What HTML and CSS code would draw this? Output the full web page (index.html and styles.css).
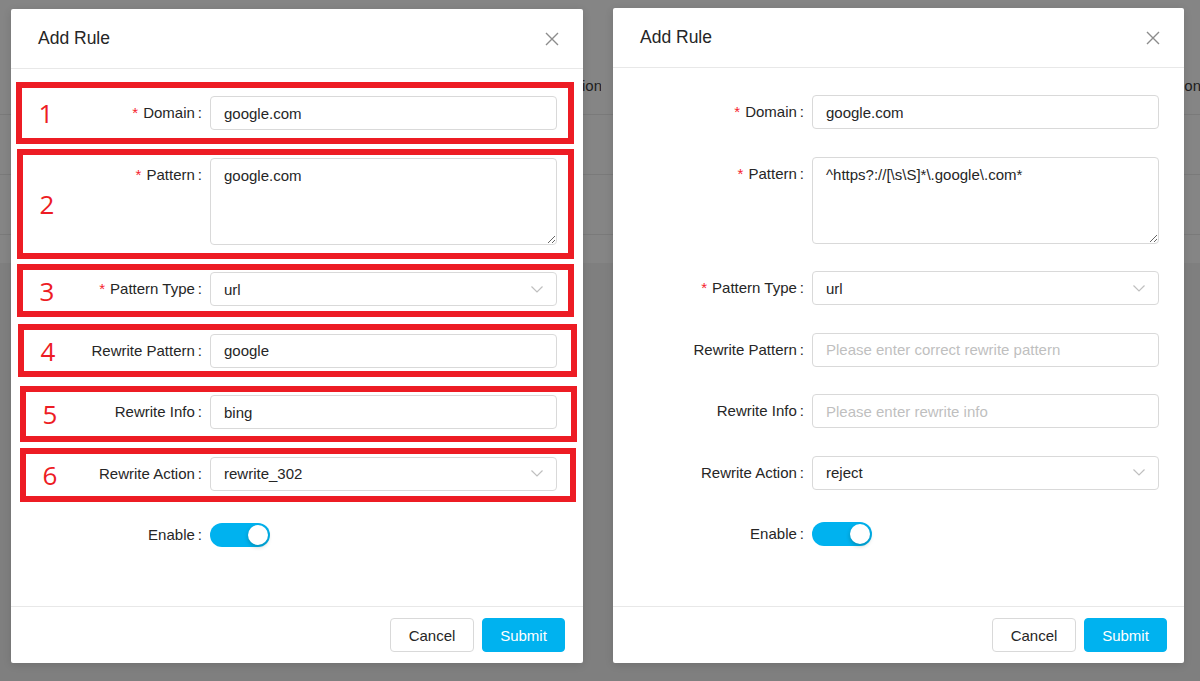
FILE: index.html
```html
<!DOCTYPE html>
<html lang="en">
<head>
<meta charset="utf-8">
<title>Add Rule</title>
<link rel="stylesheet" href="styles.css">
</head>
<body>
<div class="screen">
  <section class="half half-left">
    <div class="bg-page">
      <div class="bg-top"></div>
      <div class="bg-table">
        <div class="bg-row bg-head"><span class="bg-cell">Action</span></div>
        <div class="bg-row"></div>
        <div class="bg-row"></div>
        <div class="bg-row bg-short"></div>
      </div>
    </div>
    <div class="modal modal-left">
      <header class="modal-header">
        <h2 class="modal-title">Add Rule</h2>
        <span class="modal-close"><svg viewBox="0 0 14 14" width="14" height="14"><path d="M1 1 L13 13 M13 1 L1 13" stroke="#8c8c8c" stroke-width="1.4" fill="none"/></svg></span>
      </header>
      <div class="modal-body">
        <div class="form-item">
          <label class="form-label req">Domain</label>
          <div class="form-control"><input class="input" type="text" value="google.com"></div>
        </div>
        <div class="form-item">
          <label class="form-label req">Pattern</label>
          <div class="form-control"><textarea class="textarea">google.com</textarea></div>
        </div>
        <div class="form-item">
          <label class="form-label req">Pattern Type</label>
          <div class="form-control"><div class="select"><span>url</span><svg class="chev" viewBox="0 0 12 7" width="12" height="7"><path d="M0.5 0.5 L6 6 L11.5 0.5" stroke="#bfbfbf" stroke-width="1.2" fill="none"/></svg></div></div>
        </div>
        <div class="form-item">
          <label class="form-label">Rewrite Pattern</label>
          <div class="form-control"><input class="input" type="text" value="google"></div>
        </div>
        <div class="form-item">
          <label class="form-label">Rewrite Info</label>
          <div class="form-control"><input class="input" type="text" value="bing"></div>
        </div>
        <div class="form-item">
          <label class="form-label">Rewrite Action</label>
          <div class="form-control"><div class="select"><span>rewrite_302</span><svg class="chev" viewBox="0 0 12 7" width="12" height="7"><path d="M0.5 0.5 L6 6 L11.5 0.5" stroke="#bfbfbf" stroke-width="1.2" fill="none"/></svg></div></div>
        </div>
        <div class="form-item">
          <label class="form-label">Enable</label>
          <div class="form-control"><span class="switch"><span class="knob"></span></span></div>
        </div>
      </div>
      <footer class="modal-footer">
        <button class="btn">Cancel</button>
        <button class="btn btn-primary">Submit</button>
      </footer>
      <div class="mark mark-1"><span class="mark-num">1</span></div>
      <div class="mark mark-2"><span class="mark-num">2</span></div>
      <div class="mark mark-3"><span class="mark-num">3</span></div>
      <div class="mark mark-4"><span class="mark-num">4</span></div>
      <div class="mark mark-5"><span class="mark-num">5</span></div>
      <div class="mark mark-6"><span class="mark-num">6</span></div>
    </div>
  </section>

  <section class="half half-right">
    <div class="bg-page">
      <div class="bg-top"></div>
      <div class="bg-table">
        <div class="bg-row bg-head"><span class="bg-cell">Action</span></div>
        <div class="bg-row"></div>
        <div class="bg-row"></div>
        <div class="bg-row bg-short"></div>
      </div>
    </div>
    <div class="modal modal-right">
      <header class="modal-header">
        <h2 class="modal-title">Add Rule</h2>
        <span class="modal-close"><svg viewBox="0 0 14 14" width="14" height="14"><path d="M1 1 L13 13 M13 1 L1 13" stroke="#8c8c8c" stroke-width="1.4" fill="none"/></svg></span>
      </header>
      <div class="modal-body">
        <div class="form-item">
          <label class="form-label req">Domain</label>
          <div class="form-control"><input class="input" type="text" value="google.com"></div>
        </div>
        <div class="form-item">
          <label class="form-label req">Pattern</label>
          <div class="form-control"><textarea class="textarea">^https?://[\s\S]*\.google\.com*</textarea></div>
        </div>
        <div class="form-item">
          <label class="form-label req">Pattern Type</label>
          <div class="form-control"><div class="select"><span>url</span><svg class="chev" viewBox="0 0 12 7" width="12" height="7"><path d="M0.5 0.5 L6 6 L11.5 0.5" stroke="#bfbfbf" stroke-width="1.2" fill="none"/></svg></div></div>
        </div>
        <div class="form-item">
          <label class="form-label">Rewrite Pattern</label>
          <div class="form-control"><input class="input" type="text" placeholder="Please enter correct rewrite pattern"></div>
        </div>
        <div class="form-item">
          <label class="form-label">Rewrite Info</label>
          <div class="form-control"><input class="input" type="text" placeholder="Please enter rewrite info"></div>
        </div>
        <div class="form-item">
          <label class="form-label">Rewrite Action</label>
          <div class="form-control"><div class="select"><span>reject</span><svg class="chev" viewBox="0 0 12 7" width="12" height="7"><path d="M0.5 0.5 L6 6 L11.5 0.5" stroke="#bfbfbf" stroke-width="1.2" fill="none"/></svg></div></div>
        </div>
        <div class="form-item">
          <label class="form-label">Enable</label>
          <div class="form-control"><span class="switch"><span class="knob"></span></span></div>
        </div>
      </div>
      <footer class="modal-footer">
        <button class="btn">Cancel</button>
        <button class="btn btn-primary">Submit</button>
      </footer>
    </div>
  </section>
</div>
</body>
</html>
```

FILE: styles.css
```css
* { box-sizing: border-box; }
html, body { margin: 0; padding: 0; }
body {
  width: 1200px;
  height: 681px;
  overflow: hidden;
  background: #7f7f7f;
  font-family: "Liberation Sans", Arial, sans-serif;
  color: #333;
}
.screen { display: flex; height: 681px; }
.half { position: relative; width: 601px; height: 681px; overflow: hidden; }
.half-right { width: 599px; }

/* dimmed page behind the modal */
.bg-page { display: flex; flex-direction: column; height: 100%; background: #7f7f7f; }
.bg-top { height: 30px; background: #858585; }
.bg-table { background: #858585; }
.bg-row { height: 60px; border-bottom: 1px solid #7a7a7a; }
.bg-head { height: 85px; display: flex; align-items: flex-start; justify-content: flex-end; padding-top: 47px; }
.bg-cell { font-size: 15px; line-height: 17px; color: #1e1e1e; margin-right: -1px; }
.bg-short { height: 28px; border-bottom: none; }

/* modal */
.modal {
  position: absolute;
  background: #fff;
  display: flex;
  flex-direction: column;
  border-radius: 2px;
  box-shadow: 0 2px 8px rgba(0,0,0,0.12);
}
.modal-left { left: 11px; top: 9px; width: 572px; height: 654px; }
.modal-right { left: 12px; top: 8px; width: 571px; height: 655px; }

.modal-header {
  height: 60px;
  flex: none;
  border-bottom: 1px solid #e8e8e8;
  display: flex;
  align-items: center;
  justify-content: space-between;
  padding: 0 24px 0 27px;
}
.modal-title { margin: 0; font-size: 17.5px; font-weight: normal; color: #262626; }
.modal-close { display: flex; width: 14px; height: 14px; }

.modal-body { flex: 1; padding-top: 27px; }
.form-item { display: flex; align-items: flex-start; margin-bottom: 27.5px; }
.form-label {
  width: 199px;
  flex: none;
  text-align: right;
  font-size: 15px;
  line-height: 34px;
  color: #262626;
  white-space: nowrap;
}
.form-label::after { content: ":"; margin: 0 8px 0 3px; }
.form-label.req::before { content: "*"; color: #f5222d; margin-right: 5px; font-size: 15px; }
.form-control { width: 347px; flex: none; }
.input, .textarea, .select {
  width: 100%;
  border: 1px solid #d9d9d9;
  border-radius: 4px;
  font-family: "Liberation Sans", Arial, sans-serif;
  font-size: 15px;
  color: #262626;
  background: #fff;
  outline: none;
}
.input { height: 34px; padding: 0 13px; display: block; }
.input::placeholder { color: #bfbfbf; }
.textarea { height: 87px; padding: 6px 13px; line-height: 22px; resize: vertical; display: block; }
.select { height: 34px; padding: 0 13px; display: flex; align-items: center; justify-content: space-between; }
.chev { flex: none; }

.switch {
  display: inline-block;
  position: relative;
  margin-top: 5px;
  width: 60px;
  height: 24px;
  border-radius: 12px;
  background: #00b2ef;
}
.knob {
  position: absolute;
  right: 2px;
  top: 2px;
  width: 20px;
  height: 20px;
  border-radius: 50%;
  background: #fff;
  box-shadow: 0 2px 4px rgba(0,35,11,0.25);
}

.modal-footer {
  height: 57px;
  flex: none;
  border-top: 1px solid #e8e8e8;
  display: flex;
  justify-content: flex-end;
  align-items: center;
  gap: 8px;
  padding: 0 18px;
}
.modal-right .modal-footer { padding-right: 17px; }
.btn {
  height: 34px;
  padding: 0 17px;
  font-family: "Liberation Sans", Arial, sans-serif;
  font-size: 15px;
  border: 1px solid #d9d9d9;
  border-radius: 4px;
  background: #fff;
  color: #262626;
  width: 84px;
}
.btn-primary { background: #00b2ef; border-color: #00b2ef; color: #fff; width: 83px; }

/* red annotation frames drawn over the form */
.mark {
  position: absolute;
  border: 6px solid #ed1c24;
  display: flex;
  align-items: center;
}
.mark-num {
  width: 16px;
  margin-left: 16px;
  text-align: center;
  font-family: "Open Sans", "Liberation Sans", sans-serif;
  font-size: 26px;
  line-height: 1;
  color: #ed1c24;
}
.mark-1 { left: 5px; top: 73px; width: 558px; height: 62px; }
.mark-2 { left: 6px; top: 140px; width: 557px; height: 110px; }
.mark-3 { left: 6px; top: 255px; width: 557px; height: 53px; }
.mark-4 { left: 7px; top: 315px; width: 559px; height: 53px; }
.mark-5 { left: 9px; top: 377px; width: 557px; height: 56px; }
.mark-6 { left: 9px; top: 439px; width: 556px; height: 54px; }
```
